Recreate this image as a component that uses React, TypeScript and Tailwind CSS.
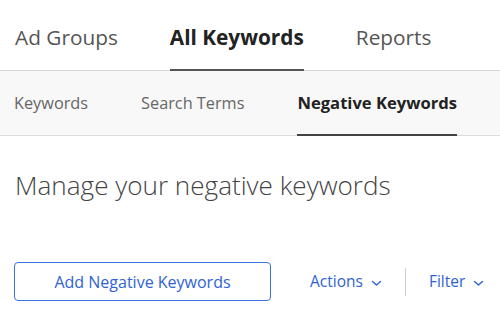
import React from 'react';

const Chevron: React.FC = () => (
  <svg width="11" height="7" viewBox="0 0 11 7" fill="none" className="ml-2 mt-[3px]">
    <path d="M1.5 1.5 L5.5 5 L9.5 1.5" stroke="currentColor" strokeWidth="1.4" strokeLinecap="round" strokeLinejoin="round" />
  </svg>
);

const App: React.FC = () => {
  const top = ['Ad Groups', 'All Keywords', 'Reports'];
  const sub = ['Keywords', 'Search Terms', 'Negative Keywords'];

  return (
    <div className="w-[500px] h-[311px] bg-white overflow-hidden text-[#333]" style={{ fontFamily: '"Open Sans", sans-serif' }}>
      <div className="flex h-[71px] border-b border-[#d6d6d6] pl-[15px] gap-[52px]">
        {top.map((t, i) => (
          <div
            key={t}
            className={`flex items-center text-[20.8px] pt-[6px] -mb-px border-b-2 ${
              i === 1 ? 'border-[#555] font-bold text-[#222]' : 'border-transparent text-[#555]'
            }`}
          >
            {t}
          </div>
        ))}
      </div>

      <div className="flex h-[65px] bg-[#f8f8f8] border-b border-[#dcdcdc] pl-[14px] gap-[53px]">
        {sub.map((t, i) => (
          <div
            key={t}
            className={`flex items-center pt-[2px] -mb-px border-b-2 ${
              i === 2 ? 'text-[16.6px] border-[#444] font-bold text-[#222]' : 'text-[16.3px] border-transparent text-[#666]'
            }`}
          >
            {t}
          </div>
        ))}
      </div>

      <h1 className="pl-[15px] pt-[36px] text-[26.1px] font-light text-[#444] leading-none">
        Manage your negative keywords
      </h1>

      <div className="flex items-center pl-[14px] pt-[64px]">
        <button className="w-[257px] h-[39px] rounded-[4px] border border-[#3a73e0] text-[#2f63d6] text-[16px]">
          Add Negative Keywords
        </button>
        <div className="flex items-center ml-[39px] text-[15.5px] text-[#2f63d6]">
          Actions
          <Chevron />
        </div>
        <div className="w-px h-[28px] bg-[#d0d0d0] mx-[23px]" />
        <div className="flex items-center text-[15.5px] text-[#2f63d6]">
          Filter
          <Chevron />
        </div>
      </div>
    </div>
  );
};

export default App;
